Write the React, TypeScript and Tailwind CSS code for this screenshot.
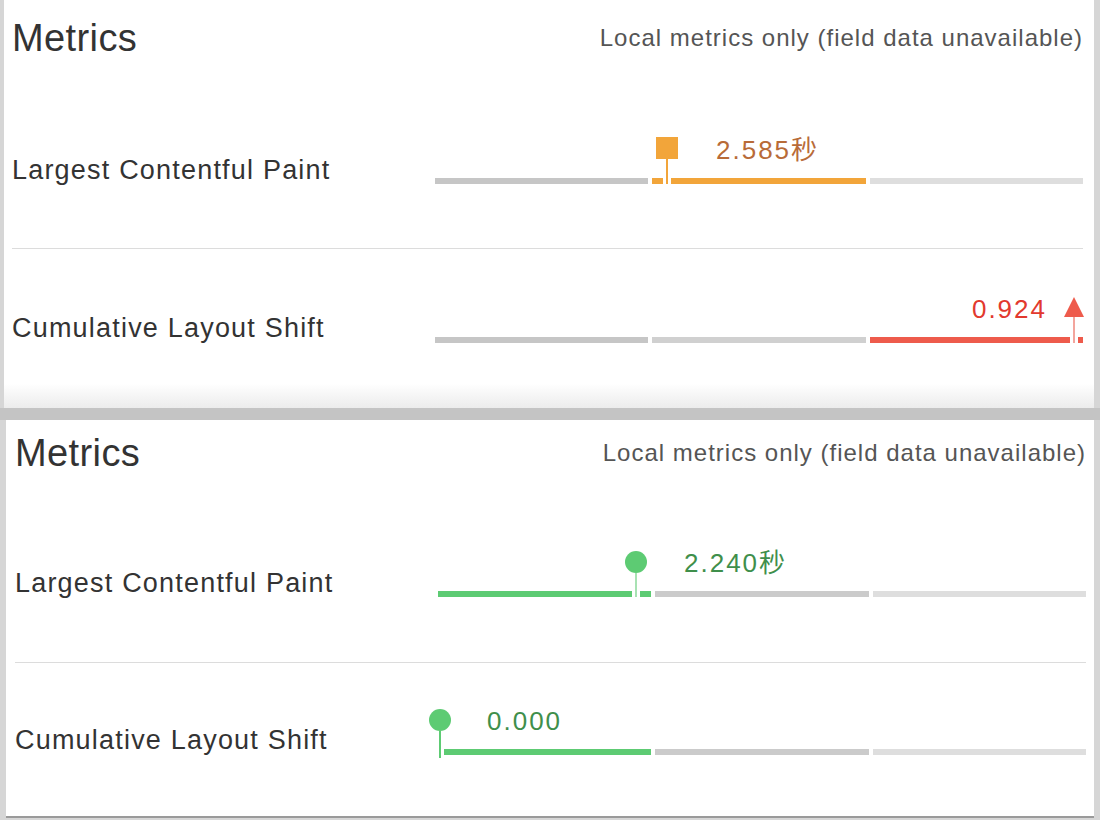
import type { ReactNode } from 'react'

type Seg = { cls: string }

const font = "font-['Liberation_Sans','Noto_Sans_CJK_SC',sans-serif]"

function Scale({ segs, children }: { segs: Seg[]; children?: ReactNode }) {
  return (
    <div className="relative h-[80px] w-[648px] flex flex-col justify-end pb-[26px]">
      <div className="flex gap-[4px] h-[6px]">
        {segs.map((s, i) => (
          <div key={i} className={`flex-1 h-full ${s.cls}`} />
        ))}
      </div>
      {children}
    </div>
  )
}

// marker: shape on top, thin line down through the bar with a white gap each side
function Marker({
  x,
  shape,
  lineCls,
  lineH,
}: {
  x: number
  shape: 'square' | 'circle' | 'triangle'
  lineCls: string
  lineH: number
}) {
  return (
    <div
      className="absolute w-[22px] flex flex-col items-center"
      style={{ left: x - 11, top: shape === 'square' ? 7 : 8 }}
    >
      {shape === 'square' && <div className="w-[22px] h-[22px] bg-[#f2a53a]" />}
      {shape === 'circle' && <div className="w-[22px] h-[22px] rounded-full bg-[#5dcb73]" />}
      {shape === 'triangle' && (
        <svg width="20" height="20" viewBox="0 0 20 20">
          <path d="M10 0 L20 20 L0 20 Z" fill="#ee5b4c" />
        </svg>
      )}
      <div className="w-[8px] flex justify-center bg-white" style={{ height: lineH }}>
        <div className={`w-[2px] h-full ${lineCls}`} />
      </div>
    </div>
  )
}

function Value({ text, cls, left, right }: { text: string; cls: string; left?: number; right?: number }) {
  return (
    <div
      className={`absolute top-[4px] h-[32px] leading-[32px] text-[26px] tracking-[2px] whitespace-nowrap ${cls}`}
      style={{ left, right }}
    >
      {text}
    </div>
  )
}

function Row({ label, pt, h, children }: { label: string; pt: number; h: number; children: ReactNode }) {
  return (
    <div className="flex items-center" style={{ height: h, paddingTop: pt }}>
      <div className="w-[423px] text-[27px] tracking-[1.2px] text-[#333]">{label}</div>
      {children}
    </div>
  )
}

function Header({ h }: { h: number }) {
  return (
    <div className="flex items-center justify-between" style={{ height: h }}>
      <h2 className="text-[38px] tracking-[0.4px] text-[#333]">Metrics</h2>
      <span className="text-[24px] tracking-[1px] text-[#555]">Local metrics only (field data unavailable)</span>
    </div>
  )
}

export default function App() {
  return (
    <div className={`w-[1100px] h-[820px] bg-[#d6d6d6] overflow-hidden ${font}`}>
      {/* first capture */}
      <div className="ml-[4px] w-[1090px] h-[408px] pl-[8px] pr-[11px] bg-linear-to-b from-white from-[94%] to-[#ececec]">
        <Header h={76} />
        <Row label="Largest Contentful Paint" pt={16} h={172}>
          <Scale segs={[{ cls: 'bg-[#c6c6c6]' }, { cls: 'bg-[#f2a53a]' }, { cls: 'bg-[#dedede]' }]}>
            <Marker x={232} shape="square" lineCls="bg-[#f2a53a]" lineH={25} />
            <Value text="2.585秒" cls="text-[#b86b38]" left={281} />
          </Scale>
        </Row>
        <div className="h-px bg-[#dcdcdc]" />
        <Row label="Cumulative Layout Shift" pt={0} h={159}>
          <Scale segs={[{ cls: 'bg-[#c6c6c6]' }, { cls: 'bg-[#d0d0d0]' }, { cls: 'bg-[#ee5b4c]' }]}>
            <Marker x={639} shape="triangle" lineCls="bg-[#f3a59d]" lineH={26} />
            <Value text="0.924" cls="text-[#e2392e]" right={36} />
          </Scale>
        </Row>
      </div>

      <div className="h-[12px] bg-[#c4c4c4]" />

      {/* second capture */}
      <div className="ml-[6px] w-[1088px] h-[398px] pl-[9px] pr-[8px] bg-white border-b-2 border-[#9a9a9a]">
        <Header h={66} />
        <Row label="Largest Contentful Paint" pt={18} h={176}>
          <Scale segs={[{ cls: 'bg-[#5dcb73]' }, { cls: 'bg-[#cbcbcb]' }, { cls: 'bg-[#dedede]' }]}>
            <Marker x={198} shape="circle" lineCls="bg-[#a8e2b3]" lineH={24} />
            <Value text="2.240秒" cls="text-[#3f8f4b]" left={246} />
          </Scale>
        </Row>
        <div className="h-px bg-[#dcdcdc]" />
        <Row label="Cumulative Layout Shift" pt={0} h={155}>
          <Scale segs={[{ cls: 'bg-[#5dcb73]' }, { cls: 'bg-[#cbcbcb]' }, { cls: 'bg-[#dedede]' }]}>
            <Marker x={2} shape="circle" lineCls="bg-[#5dcb73]" lineH={27} />
            <Value text="0.000" cls="text-[#3f8f4b]" left={49} />
          </Scale>
        </Row>
      </div>
    </div>
  )
}
